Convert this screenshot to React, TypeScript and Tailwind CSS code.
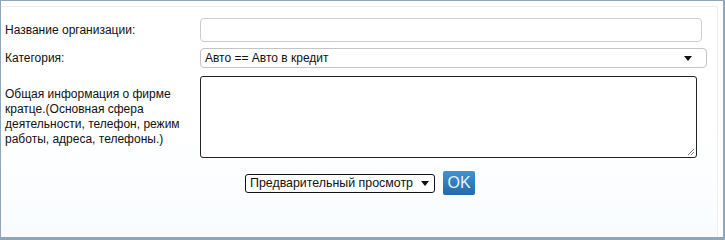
import React from "react";

const Tri = () => (
  <svg width="8" height="5" viewBox="0 0 8 5" className="shrink-0">
    <path d="M0 0 L8 0 L4 5 Z" fill="#111" />
  </svg>
);

export default function App() {
  return (
    <div
      className="w-[725px] h-[240px] bg-white border-t border-l border-r-2 border-b-[3px] border-[#8ea6b9] flex flex-col text-[12px] text-[#111]"
      style={{ fontFamily: '"Liberation Sans", Arial, sans-serif' }}
    >
      <div className="flex-1 mt-[5px] mr-[5px] border-t border-r border-[#eeeeee] bg-gradient-to-b from-white via-white to-[#f9fcff] pl-[4px]">
        <div className="grid grid-cols-[195px_auto] mt-[11px] gap-y-0">
          <div className="h-[24px] flex items-center">Название организации:</div>
          <div className="h-[24px] w-[502px] border border-[#cccccc] rounded-[4px] bg-white"></div>

          <div className="h-[20px] mt-[6px] flex items-center">Категория:</div>
          <div className="h-[20px] mt-[6px] w-[507px] border border-[#c4c4c4] rounded-[4px] bg-white flex items-center justify-between pl-[4px] pr-[14px]">
            <span>Авто == Авто в кредит</span>
            <Tri />
          </div>

          <div className="mt-[8px] pt-[11px] leading-[15px]">
            Общая информация о фирме
            <br />
            кратце.(Основная сфера
            <br />
            деятельности, телефон, режим
            <br />
            работы, адреса, телефоны.)
          </div>
          <div className="mt-[8px] h-[82px] w-[497px] border-[1.5px] border-[#222] rounded-[3px] bg-white relative">
            <svg width="9" height="9" viewBox="0 0 9 9" className="absolute right-[1px] bottom-[1px]">
              <path d="M8 2 L2 8 M8 5 L5 8" stroke="#777" strokeWidth="1" />
            </svg>
          </div>
        </div>

        <div className="flex items-center ml-[240px] mt-[13px] gap-[8px]">
          <div className="h-[19px] w-[190px] border border-[#111] rounded-[3px] bg-white flex items-center justify-between pl-[4px] pr-[5px] text-[12.4px] whitespace-nowrap">
            <span>Предварительный просмотр</span>
            <Tri />
          </div>
          <div className="h-[24px] w-[32px] rounded-[2px] bg-gradient-to-b from-[#3f93d1] to-[#2569a8] flex items-center justify-center text-[16px] font-light text-[#e8f2fb]">
            OK
          </div>
        </div>
      </div>
    </div>
  );
}
